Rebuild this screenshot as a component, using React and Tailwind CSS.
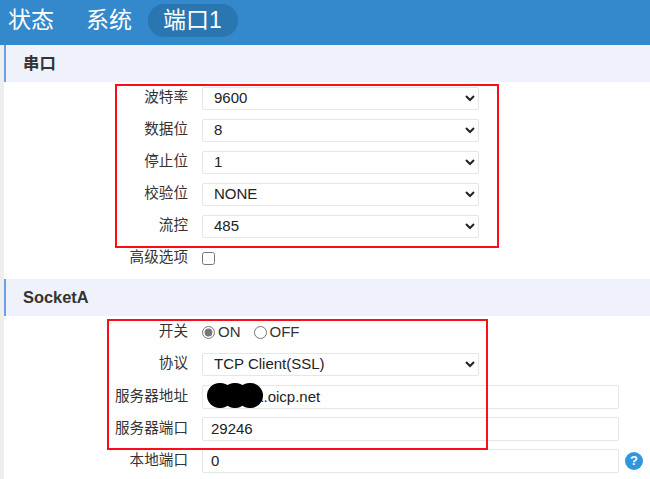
const F = "font-['Liberation_Sans','Noto_Sans_CJK_SC',sans-serif]";

function Row({ label, className = "", children }) {
  return (
    <div className={"flex items-center h-[32px] " + className}>
      <div className="w-[184px] text-right text-[14.6px] text-[#333] shrink-0">{label}</div>
      <div className="ml-[14px] flex items-center flex-1">{children}</div>
    </div>
  );
}

function Sel({ value }) {
  return (
    <select defaultValue={value} className="w-[277px] h-[23px] bg-white border border-[#e6e6e6] rounded-[2px] pl-[7px] pb-[2px] text-[15px] text-[#222] outline-none">
      <option>{value}</option>
    </select>
  );
}

function Inp({ value }) {
  return (
    <input readOnly value={value} className="w-[417px] h-[24px] bg-white border border-[#e6e6e6] rounded-[2px] pl-[8px] pb-[2px] text-[15px] text-[#222] outline-none" />
  );
}

function Head({ children }) {
  return (
    <div className="h-[37px] bg-[#eff2fa] border-l-[2px] border-[#6f9fe8] pl-[17px] flex items-center text-[16.4px] font-bold text-[#333]">
      {children}
    </div>
  );
}

export default function App() {
  return (
    <div className={F + " w-[650px] h-[479px] overflow-hidden bg-white relative flex flex-col"}>
      <div className="h-[45px] shrink-0 bg-[#3389cc] flex items-start text-white text-[23px]">
        <div className="ml-[8px] mt-[4px] leading-[33px]">状态</div>
        <div className="ml-[32px] mt-[4px] leading-[33px]">系统</div>
        <div className="ml-[16px] mt-[4px] w-[90px] h-[33px] rounded-[16px] bg-[#2a76b0] pl-[15px] leading-[33px]">端口1</div>
      </div>
      <div className="flex flex-1">
        <div className="w-[4px] bg-[#eeeeee] shrink-0" />
        <div className="flex-1">
          <Head>串口</Head>
          <Row label="波特率"><Sel value="9600" /></Row>
          <Row label="数据位"><Sel value="8" /></Row>
          <Row label="停止位"><Sel value="1" /></Row>
          <Row label="校验位"><Sel value="NONE" /></Row>
          <Row label="流控"><Sel value="485" /></Row>
          <Row label="高级选项" className="mb-[5px]">
            <input type="checkbox" className="m-0 w-[13px] h-[13px]" />
          </Row>
          <Head>SocketA</Head>
          <Row label="开关">
            <label className="flex items-center text-[15px] text-[#333]">
              <input type="radio" name="sw" defaultChecked className="m-0 w-[13px] h-[13px] accent-[#777]" />
              <span className="ml-[3px]">ON</span>
            </label>
            <label className="ml-[13px] flex items-center text-[15px] text-[#333]">
              <input type="radio" name="sw" className="m-0 w-[13px] h-[13px]" />
              <span className="ml-[3px]">OFF</span>
            </label>
          </Row>
          <Row label="协议" className="mb-[1px]"><Sel value="TCP Client(SSL)" /></Row>
          <Row label="服务器地址">
            <div className="relative flex">
              <Inp value="xxxxxxx.oicp.net" />
              <div className="absolute left-[5px] top-[-2px] flex">
                <div className="w-[26px] h-[25px] rounded-full bg-black" />
                <div className="w-[26px] h-[25px] rounded-full bg-black -ml-[11px]" />
                <div className="w-[26px] h-[25px] rounded-full bg-black -ml-[11px]" />
              </div>
            </div>
          </Row>
          <Row label="服务器端口"><Inp value="29246" /></Row>
          <Row label="本地端口">
            <Inp value="0" />
            <div className="ml-[6px] w-[18px] h-[18px] rounded-full bg-[#2f97dd] text-white text-[13px] font-bold flex items-center justify-center">?</div>
          </Row>
        </div>
      </div>
      <div className="absolute left-[115px] top-[84px] w-[384px] h-[164px] border-2 border-[#fb0d1b] pointer-events-none" />
      <div className="absolute left-[107px] top-[319px] w-[381px] h-[131px] border-2 border-[#fb0d1b] pointer-events-none" />
    </div>
  );
}
